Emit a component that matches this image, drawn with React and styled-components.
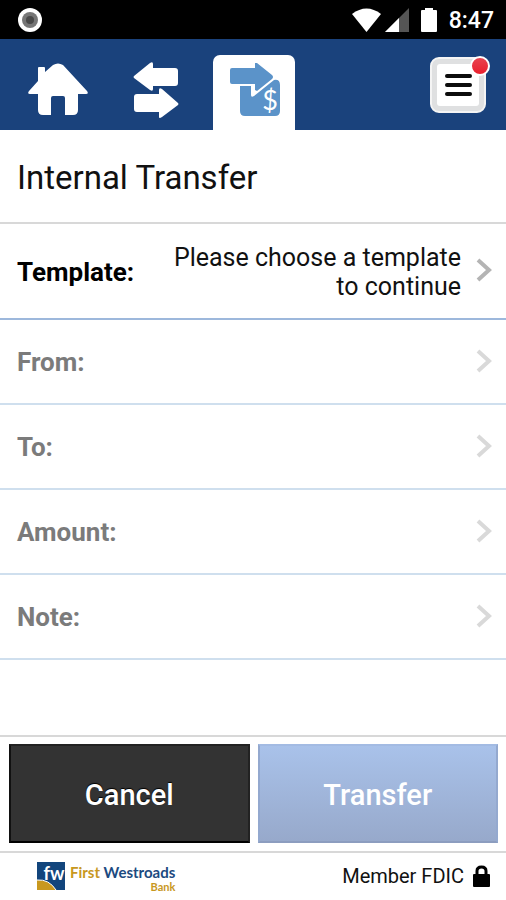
import React from 'react';
import styled, { createGlobalStyle, ThemeProvider } from 'styled-components';

const theme = {
  colors: {
    navy: '#1a427c',
    icon: '#5b93c9',
    gold: '#c8981e',
    text: '#111111',
    muted: '#7b7b7b',
    line: '#d8d8d8',
    rowLine: '#cfdfee',
    rowLineActive: '#9db8dc',
  },
  fontSizes: {
    small: '20px',
    medium: '25px',
    label: '26px',
    button: '29px',
    title: '33px',
  },
};

const GlobalStyle = createGlobalStyle`
  * {
    box-sizing: border-box;
  }

  body {
    margin: 0;
    background: #fff;
    font-family: Roboto, 'Liberation Sans', sans-serif;
  }

  button {
    font-family: inherit;
  }
`;

const Screen = styled.div`
  display: flex;
  flex-direction: column;
  min-height: 100vh;
  background: #fff;
  color: ${props => props.theme.colors.text};
`;

const StatusBar = styled.div`
  display: flex;
  align-items: center;
  justify-content: space-between;
  height: 39px;
  padding: 1px 12px 0 18px;
  background: #000;
  color: #fff;
`;

const StatusIcons = styled.div`
  display: flex;
  align-items: center;
  gap: ${props => (props.$tight ? '4px' : '12px')};
`;

const Clock = styled.span`
  padding-top: 2px;
  font-size: 23px;
  font-weight: 500;
  line-height: 28px;
`;

const Header = styled.header`
  display: flex;
  justify-content: space-between;
  height: 91px;
  padding: 0 20px 0 9px;
  background: ${props => props.theme.colors.navy};
`;

const Nav = styled.nav`
  display: flex;
  align-items: flex-end;
  gap: 16px;
  padding-left: 8px;
`;

const NavLink = styled.a`
  display: flex;
  align-items: center;
  justify-content: center;
  width: 82px;
  height: 75px;
  padding-bottom: 6px;
  border-radius: 7px 7px 0 0;
  background: ${props => (props.$active ? '#fff' : 'transparent')};
`;

const MenuButton = styled.button`
  position: relative;
  display: flex;
  align-items: center;
  justify-content: center;
  width: 56px;
  height: 56px;
  margin-top: 18px;
  padding: 0;
  border: 2px solid #f4f4f4;
  border-radius: 9px;
  background: #dfe0e1;
`;

const MenuFace = styled.span`
  display: flex;
  flex-direction: column;
  align-items: center;
  justify-content: center;
  gap: 5px;
  width: 42px;
  height: 42px;
  border-radius: 3px;
  background: #fff;
`;

const MenuLine = styled.span`
  width: 27px;
  height: 4px;
  border-radius: 2px;
  background: #0c0c0c;
`;

const AlertDot = styled.span`
  position: absolute;
  top: -3px;
  right: -6px;
  width: 20px;
  height: 20px;
  border: 2px solid #fff;
  border-radius: 50%;
  background: linear-gradient(#e8434f, #ea1f2d);
`;

const Title = styled.h1`
  margin: 0;
  padding: 30px 17px 26px;
  border-bottom: 2px solid ${props => props.theme.colors.line};
  font-size: ${props => props.theme.fontSizes.title};
  font-weight: 400;
  line-height: 36px;
`;

const Form = styled.main`
  flex: 1;
`;

const Row = styled.button`
  display: flex;
  align-items: center;
  justify-content: space-between;
  width: 100%;
  min-height: 85px;
  padding: 19px 14px 17px 17px;
  border: 0;
  border-bottom: 2px solid
    ${props => (props.$active ? props.theme.colors.rowLineActive : props.theme.colors.rowLine)};
  background: transparent;
  color: ${props => (props.$active ? '#000' : props.theme.colors.muted)};
  font-size: ${props => props.theme.fontSizes.medium};
  line-height: 29px;
  text-align: left;
`;

const RowLabel = styled.span`
  font-size: ${props => props.theme.fontSizes.label};
  font-weight: 700;
`;

const RowValue = styled.span`
  flex: 1;
  max-width: 312px;
  margin-left: auto;
  padding-right: 15px;
  color: ${props => props.theme.colors.text};
  text-align: right;
`;

const Actions = styled.div`
  display: grid;
  grid-template-columns: 1fr 1fr;
  gap: 8px;
  padding: 7px 8px 8px 9px;
  border-top: 2px solid ${props => props.theme.colors.line};
  border-bottom: 2px solid ${props => props.theme.colors.line};
`;

const ActionButton = styled.button`
  height: 99px;
  padding: 2px 0 0;
  border: 2px solid;
  border-color: ${props => (props.$primary ? '#a3bbe3 #94a9cf #8c9dbf #94a9cf' : '#222 #222 #000 #111')};
  background: ${props => (props.$primary ? 'linear-gradient(#a9c2ea, #97a9cb)' : '#333')};
  color: #fff;
  font-size: ${props => props.theme.fontSizes.button};
  font-weight: 500;
  text-shadow: ${props => (props.$primary ? 'none' : '0 -1px 1px #000')};
`;

const Footer = styled.footer`
  display: flex;
  align-items: center;
  justify-content: space-between;
  height: 47px;
  padding: 0 16px 1px 37px;
`;

const Brand = styled.a`
  display: flex;
  align-items: center;
  gap: 5px;
  text-decoration: none;
`;

const BrandText = styled.span`
  display: flex;
  flex-direction: column;
  padding-top: 4px;
  color: ${props => props.theme.colors.gold};
  font-family: Lato, sans-serif;
  font-size: 15px;
  font-weight: 700;
  line-height: 18px;
`;

const BrandName = styled.span`
  color: #1c4a80;
`;

const BrandFirst = styled.span`
  color: ${props => props.theme.colors.gold};
`;

const BrandSub = styled.span`
  font-size: 11px;
  line-height: 12px;
  text-align: right;
`;

const Member = styled.span`
  display: flex;
  align-items: center;
  gap: 9px;
  font-size: ${props => props.theme.fontSizes.small};
  line-height: 24px;
`;

const RecordIcon = () => (
  <svg width="24" height="24" viewBox="0 0 24 24" aria-hidden="true">
    <circle cx="12" cy="12" r="12" fill="#fff" />
    <circle cx="12" cy="12" r="8" fill="#777" />
    <circle cx="12" cy="12" r="4" fill="#4a4a4a" />
  </svg>
);

const WifiIcon = () => (
  <svg width="29" height="24" viewBox="0 0 29 24" aria-hidden="true">
    <path d="M0 6 Q14.5 -5 29 6 L14.5 24 Z" fill="#fff" />
  </svg>
);

const SignalIcon = () => (
  <svg width="24" height="24" viewBox="0 0 24 24" aria-hidden="true">
    <path d="M0 24 L24 0 V24 Z" fill="#555" />
    <path d="M0 24 L14 10 V24 Z" fill="#fff" />
  </svg>
);

const BatteryIcon = () => (
  <svg width="16" height="24" viewBox="0 0 16 24" aria-hidden="true">
    <path d="M1 2 H4 V0 H12 V2 H15 Q16 2 16 3 V23 Q16 24 15 24 H1 Q0 24 0 23 V3 Q0 2 1 2 Z" fill="#fff" />
  </svg>
);

const HomeIcon = () => (
  <svg width="60" height="54" viewBox="0 0 60 54" aria-hidden="true">
    <path
      d="M10 5 Q10 4 11 4 H16 Q17 4 17 5 V9 L25 2 Q30 -1 35 2 L59 28 Q61 31 58 31 H50 V47 Q50 52 45 52 H37 V35 Q37 33 35 33 H25 Q23 33 23 35 V52 H15 Q10 52 10 47 V31 H2 Q-1 31 1 28 L10 18 Z"
      fill="#fff"
    />
  </svg>
);

const SwapIcon = () => (
  <svg width="46" height="58" viewBox="0 0 46 58" aria-hidden="true">
    <path d="M1 15 L17 2 Q20 0 20 3 V7 H42 Q45 7 45 10 V22 Q45 25 42 25 H20 V28 Q20 31 17 29 L1 17 Q0 16 1 15 Z" fill="#fff" />
    <path d="M45 42 L29 28 Q26 26 26 29 V33 H4 Q1 33 1 36 V48 Q1 51 4 51 H26 V56 Q26 58 29 56 L45 44 Q46 43 45 42 Z" fill="#fff" />
  </svg>
);

const TransferIcon = () => (
  <svg width="52" height="54" viewBox="-2 1 52 54" aria-hidden="true">
    <path
      d="M10 24 H21 V33 Q21 36 24 34 L44 18 Q50 17 50 23 V49 Q50 54 45 54 H15 Q10 54 10 49 Z"
      fill="#5b93c9"
    />
    <path
      d="M2 6 H25 V1 Q25 0 27 1 L42 13 Q44 15 42 17 L27 29 L25 28 V22 H2 Q0 22 0 20 V8 Q0 6 2 6 Z"
      fill="#5b93c9"
      stroke="#fff"
      strokeWidth="3"
      paintOrder="stroke"
    />
    <text x="40" y="48" textAnchor="middle" fill="#fff" fontFamily="Lato, sans-serif" fontSize="27">
      $
    </text>
  </svg>
);

const ChevronIcon = ({ color }) => (
  <svg width="16" height="28" viewBox="0 0 16 28" aria-hidden="true">
    <path d="M2 2 L13 12 L2 22" fill="none" stroke={color} strokeWidth="4" />
  </svg>
);

const BrandMark = () => (
  <svg width="28" height="28" viewBox="0 0 28 28" aria-hidden="true">
    <rect width="28" height="28" fill="#12457c" />
    <path d="M0 18 Q12 17 19 28 H0 Z" fill="#c8981e" />
    <path d="M0 18 Q12 17 19 28" fill="none" stroke="#fff" strokeWidth="1" />
    <text x="17" y="18" textAnchor="middle" fill="#fff" fontFamily="Lato, sans-serif" fontSize="18" fontWeight="700">
      fw
    </text>
  </svg>
);

const LockIcon = () => (
  <svg width="17" height="22" viewBox="0 0 17 22" aria-hidden="true">
    <path d="M4 11 V6 Q4 2 8.5 2 Q13 2 13 6 V11" fill="none" stroke="#000" strokeWidth="3" />
    <rect y="9" width="17" height="13" rx="1" fill="#000" />
  </svg>
);

const rows = [
  { id: 'template', label: 'Template:', value: 'Please choose a template to continue', active: true },
  { id: 'from', label: 'From:' },
  { id: 'to', label: 'To:' },
  { id: 'amount', label: 'Amount:' },
  { id: 'note', label: 'Note:' },
];

const App = () => {
  return (
    <ThemeProvider theme={theme}>
      <GlobalStyle />
      <Screen>
        <StatusBar>
          <RecordIcon />
          <StatusIcons>
            <StatusIcons $tight>
              <WifiIcon />
              <SignalIcon />
            </StatusIcons>
            <BatteryIcon />
            <Clock>8:47</Clock>
          </StatusIcons>
        </StatusBar>
        <Header>
          <Nav>
            <NavLink href="#home" aria-label="Home">
              <HomeIcon />
            </NavLink>
            <NavLink href="#transfers" aria-label="Transfers">
              <SwapIcon />
            </NavLink>
            <NavLink href="#internal" aria-label="Internal Transfer" $active>
              <TransferIcon />
            </NavLink>
          </Nav>
          <MenuButton type="button" aria-label="Menu">
            <MenuFace>
              <MenuLine />
              <MenuLine />
              <MenuLine />
            </MenuFace>
            <AlertDot />
          </MenuButton>
        </Header>
        <Title>Internal Transfer</Title>
        <Form>
          {rows.map(row => (
            <Row key={row.id} type="button" $active={row.active}>
              <RowLabel>{row.label}</RowLabel>
              {row.value && <RowValue>{row.value}</RowValue>}
              <ChevronIcon color={row.active ? '#b4b4b4' : '#d9d9d9'} />
            </Row>
          ))}
        </Form>
        <Actions>
          <ActionButton type="button">Cancel</ActionButton>
          <ActionButton type="button" $primary>Transfer</ActionButton>
        </Actions>
        <Footer>
          <Brand href="#bank">
            <BrandMark />
            <BrandText>
              <BrandName>
                <BrandFirst>First</BrandFirst> Westroads
              </BrandName>
              <BrandSub>Bank</BrandSub>
            </BrandText>
          </Brand>
          <Member>
            Member FDIC
            <LockIcon />
          </Member>
        </Footer>
      </Screen>
    </ThemeProvider>
  );
};

export default App;
